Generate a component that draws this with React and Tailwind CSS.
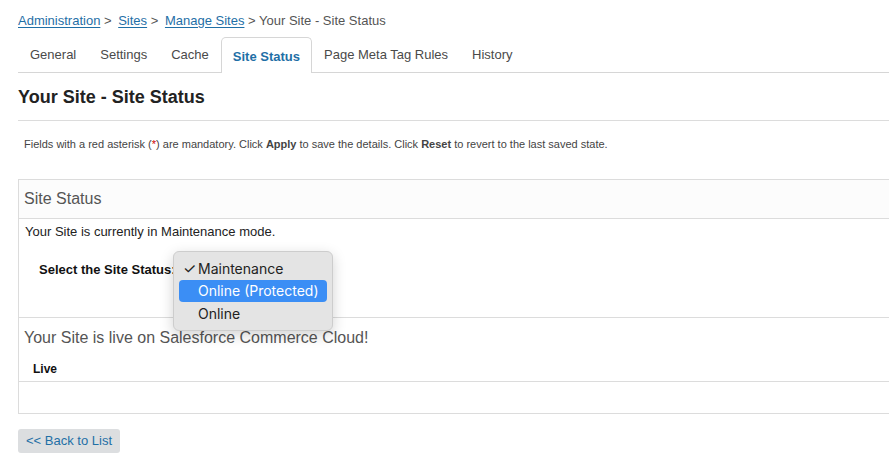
import { useState } from "react";

const tabs = ["General", "Settings", "Cache", "Site Status", "Page Meta Tag Rules", "History"];
const options = ["Maintenance", "Online (Protected)", "Online"];

export default function App() {
  const [active, setActive] = useState("Site Status");
  const [status, setStatus] = useState("Maintenance");
  const [hover, setHover] = useState("Online (Protected)");

  return (
    <div className="w-[889px] h-[469px] overflow-hidden bg-white font-['Liberation_Sans',Arial,sans-serif] text-[#222]">
      <div className="w-[940px] pl-[18px]">
        {/* Breadcrumb */}
        <div className="pt-[11px] h-[37px] text-[13px] text-[#555]">
          <a href="#" className="text-[#1f6fa6] underline underline-offset-2">Administration</a>
          <span> &gt; </span>
          <a href="#" className="ml-[3px] text-[#1f6fa6] underline underline-offset-2">Sites</a>
          <span> &gt; </span>
          <a href="#" className="ml-[3px] text-[#1f6fa6] underline underline-offset-2">Manage Sites</a>
          <span> &gt; Your Site - Site Status</span>
        </div>

        {/* Tabs */}
        <div className="flex h-[36px] border-b border-[#d6d6d6]">
          {tabs.map((t) => (
            <button
              key={t}
              onClick={() => setActive(t)}
              className={
                t === active
                  ? "px-[11px] h-[36px] -mb-px border border-b-0 border-[#d6d6d6] rounded-t-[5px] bg-white text-[13px] font-bold text-[#1f6fa6] pt-[2px]"
                  : "px-[11px] h-[36px] border border-transparent text-[13px] text-[#4a4a4a] pb-[1px]"
              }
            >
              {t}
            </button>
          ))}
        </div>

        {/* Title */}
        <h1 className="pt-[11px] h-[48px] text-[18px] font-bold text-[#222] border-b border-[#dcdcdc]">
          Your Site - Site Status
        </h1>

        <p className="pl-[6px] pt-[15px] h-[58px] text-[11px] text-[#444]">
          Fields with a red asterisk (<span className="text-[#c00]">*</span>) are mandatory. Click <b>Apply</b> to save the details. Click <b>Reset</b> to revert to the last saved state.
        </p>

        {/* Table */}
        <div className="border border-[#dcdcdc]">
          <div className="h-[39px] bg-[#fcfcfc] border-b border-[#dcdcdc] pl-[5px] flex items-center text-[16px] text-[#555]">
            Site Status
          </div>
          <div className="h-[99px] border-b border-[#dcdcdc] pl-[6px] pt-[3px] text-[13px]">
            <div>Your Site is currently in Maintenance mode.</div>
            <div className="relative mt-[18px] pl-[14px] flex items-center">
              <span className="font-bold text-[13px] text-[#111]">Select the Site Status:</span>
              <div className="absolute left-[148px] top-[-9px] w-[160px] h-[80px] rounded-[6px] border border-[#cdcdcd] bg-[#e4e4e4] shadow-[0_4px_14px_rgba(0,0,0,0.18)] px-[5px] py-[5px] font-['Inter','Liberation_Sans',sans-serif] text-[14px] text-[#222]">
                {options.map((o) => (
                  <div
                    key={o}
                    onMouseEnter={() => setHover(o)}
                    onClick={() => setStatus(o)}
                    className={
                      o === hover
                        ? "h-[22px] flex items-center rounded-[4px] bg-[#3b8ef5] text-white pl-[19px]"
                        : "h-[23px] flex items-center pl-[4px]"
                    }
                  >
                    {o === hover ? null : (
                      <span className="w-[15px] text-[15px] leading-none">{o === status ? "✓" : ""}</span>
                    )}
                    {o}
                  </div>
                ))}
              </div>
            </div>
          </div>
          <div className="h-[64px] border-b border-[#dcdcdc] pl-[5px] pt-[8px]">
            <div className="text-[16px] text-[#555]">Your Site is live on Salesforce Commerce Cloud!</div>
            <div className="mt-[10px] pl-[9px] text-[12px] font-bold text-[#111]">Live</div>
          </div>
          <div className="h-[31px]"></div>
        </div>

        <button className="mt-[15px] h-[24px] px-[8px] rounded-[3px] bg-[#dcdee0] text-[13px] text-[#1f6fa6]">
          &lt;&lt; Back to List
        </button>
      </div>
    </div>
  );
}
